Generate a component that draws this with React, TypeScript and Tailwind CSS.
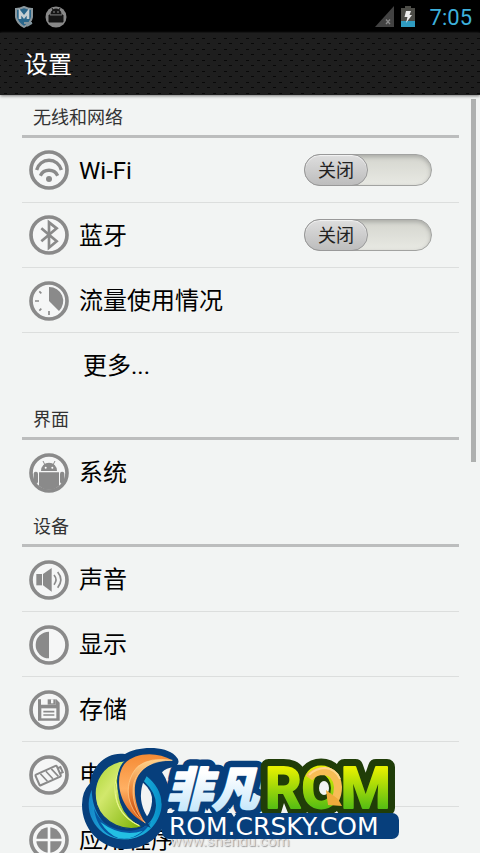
import { useState, type ReactNode } from 'react';

interface RowProps {
    label: string;
    icon?: ReactNode;
    last?: boolean;
}

function RingIcon({ children }: { children: ReactNode }) {
    return (
        <svg viewBox="0 0 120 120" className="size-10 shrink-0 text-[#8a8a8a]" fill="currentColor" aria-hidden="true">
            <circle cx="60" cy="60" r="54" fill="#f5f6f6" stroke="currentColor" strokeWidth="11" />
            {children}
        </svg>
    );
}

const icons = {
    wifi: (
        <RingIcon>
            <g fill="none" stroke="currentColor" strokeWidth="10">
                <path d="M23 60A38 38 0 0 1 97 60" />
                <path d="M34 77A29 29 0 0 1 86 77" />
            </g>
            <circle cx="60" cy="87" r="9" />
        </RingIcon>
    ),
    bluetooth: (
        <RingIcon>
            <path d="M37 40L83 79L60 98V22L83 40L37 79" fill="none" stroke="currentColor" strokeWidth="8" />
        </RingIcon>
    ),
    data: (
        <RingIcon>
            <path d="M60 60V18A42 42 0 0 1 90 90Z" />
            <path d="M60 90V102M37 83L31 89M18 60H30M37 37L31 31" fill="none" stroke="currentColor" strokeWidth="5" />
        </RingIcon>
    ),
    android: (
        <RingIcon>
            <path d="M36 54A24 25 0 0 1 84 54Z" />
            <path d="M48 36L42 24M72 36L78 24" stroke="currentColor" strokeWidth="3" />
            <path d="M30 58H90V98Q78 110 60 110Q42 110 30 98Z" />
            <rect x="14" y="56" width="13" height="36" rx="6" />
            <rect x="93" y="56" width="13" height="36" rx="6" />
            <circle cx="50" cy="44" r="3" fill="#fff" />
            <circle cx="70" cy="44" r="3" fill="#fff" />
        </RingIcon>
    ),
    sound: (
        <RingIcon>
            <rect x="22" y="42" width="17" height="34" />
            <path d="M42 42L68 24V95L42 76Z" />
            <path d="M75 45Q87 59 75 74M86 36Q105 59 86 83" fill="none" stroke="currentColor" strokeWidth="5" />
        </RingIcon>
    ),
    display: (
        <RingIcon>
            <path d="M60 20A40 40 0 0 0 60 100Z" />
        </RingIcon>
    ),
    storage: (
        <RingIcon>
            <path d="M27 28H36V44H80V28H82L92 38V92H27Z" />
            <path d="M56 28H80V44H56Z" />
            <rect x="66" y="28" width="7" height="12" fill="#f7f8f8" />
            <rect x="37" y="55" width="45" height="30" fill="#f7f8f8" />
            <path d="M43 65H76M43 75H76" stroke="currentColor" strokeWidth="5" />
        </RingIcon>
    ),
    battery: (
        <RingIcon>
            <g transform="rotate(-24 60 60)" fill="none" stroke="currentColor" strokeWidth="6">
                <rect x="22" y="43" width="70" height="35" rx="3" />
                <path d="M92 52H101V69H92" />
                <path d="M38 46L48 75M56 46L66 75M74 46L84 75" strokeWidth="5" />
            </g>
        </RingIcon>
    ),
    apps: (
        <RingIcon>
            <circle cx="60" cy="60" r="38" />
            <path d="M60 20V100M20 60H100" stroke="#f7f8f8" strokeWidth="8" />
        </RingIcon>
    ),
};

function StatusBar() {
    return (
        <div className="flex h-[33px] shrink-0 items-center bg-black px-2">
            <svg viewBox="0 0 20 22" className="ml-1 h-[22px] w-6" aria-hidden="true">
                <path d="M2 3Q6 3 10 1Q14 3 18 3V11Q17 17 10 21Q3 17 2 11Z" fill="#28658a" stroke="#8b979d" strokeWidth="2" />
                <path d="M6 13V6L10 11L14 6V13" fill="none" stroke="#c5ced2" strokeWidth="2.6" />
                <path d="M10 17H18M13 20L18 17" stroke="#81949d" strokeWidth="2" />
            </svg>
            <svg viewBox="0 0 22 22" className="ml-[9px] size-[22px]" aria-hidden="true">
                <circle cx="11" cy="11" r="10.5" fill="#888" />
                <path d="M6 8A5 5 0 0 1 16 8ZM7 2L8.500 5M15 2L13.500 5M4 9H18V16H4Z" fill="#151515" stroke="#151515" />
                <path d="M5 9H17" stroke="#888" strokeWidth=".8" />
                <circle cx="9" cy="6" r=".8" fill="#999" />
                <circle cx="13" cy="6" r=".8" fill="#999" />
            </svg>
            <svg viewBox="0 0 19 21" className="mr-[7px] ml-auto h-[21px] w-[19px]" aria-hidden="true">
                <path d="M19 0V21H0Z" fill="#424242" />
                <path d="M11 13.500L15 18M15 13.500L11 18" stroke="#8c8c8c" strokeWidth="1.300" />
            </svg>
            <svg viewBox="0 0 14 21" className="mr-[15px] h-[21px] w-3.5" aria-hidden="true">
                <path d="M4 0H10V2H14V21H0V2H4Z" fill="#4d4d48" />
                <path d="M0 15H14V21H0Z" fill="#2f9bc0" />
                <path d="M5 5H10L8.500 9H11L5 17L6.500 11H3.500Z" fill="#eee" />
            </svg>
            <span className="pt-0.5 font-[Roboto,sans-serif] text-[22px] leading-8 text-[#3eb1dc]">7:05</span>
        </div>
    );
}

function SectionTitle({ children }: { children: ReactNode }) {
    return (
        <h2 className="h-[43px] border-b-3 border-[#bcbdbd] pl-[11px] text-lg leading-[45px] text-[#333]">{children}</h2>
    );
}

function Row({ label, icon, last }: RowProps) {
    return (
        <li className={last ? '' : 'border-b border-[#dcdedd]'}>
            <button type="button" className="flex h-16 w-full items-center gap-2.5 pt-0.5 pl-[7px] text-left text-2xl">
                {icon}
                <span className={icon ? '' : 'pl-[54px]'}>{label}</span>
            </button>
        </li>
    );
}

function SwitchRow({ label, icon }: RowProps) {
    const [on, setOn] = useState(false);

    return (
        <li className="border-b border-[#dcdedd]">
            <label className="flex h-16 items-center gap-2.5 pr-[27px] pl-[7px] text-2xl">
                {icon}
                <span className="flex-1 pt-0.5">{label}</span>
                <input type="checkbox" role="switch" className="peer sr-only" checked={on} onChange={() => setOn(!on)} />
                <span className="flex h-8 w-32 rounded-full border border-[#a2a3a1] bg-linear-to-b from-[#d4d5ce] to-[#e8e9e3] shadow-[inset_0_2px_4px_#a9aaa6] peer-checked:justify-end">
                    <span className="-my-px -ml-px w-16 rounded-full border border-[#999] bg-linear-to-b from-[#dedede] to-[#bdbdbd] text-center text-lg leading-8 text-[#222] shadow-[inset_0_1px_1px_#f4f4f4]">
                        {on ? '打开' : '关闭'}
                    </span>
                </span>
            </label>
        </li>
    );
}

function RomLogo() {
    return (
        <svg viewBox="0 0 325 106" className="absolute bottom-0.5 left-20 h-[106px] w-[325px]" aria-label="非凡ROM">
            <defs>
                <linearGradient id="green" x1="0" y1="0" x2="1" y2="1">
                    <stop offset="0" stopColor="#a8d431" />
                    <stop offset=".35" stopColor="#d2e86c" />
                    <stop offset="1" stopColor="#78b000" />
                </linearGradient>
                <linearGradient id="orange" x1="0" y1="0" x2="0" y2="1">
                    <stop offset="0" stopColor="#f58b35" />
                    <stop offset=".5" stopColor="#ffb063" />
                    <stop offset="1" stopColor="#d65a10" />
                </linearGradient>
                <linearGradient id="orangeInner" x1="0" y1="0" x2="0" y2="1">
                    <stop offset="0" stopColor="#ffd28b" />
                    <stop offset=".5" stopColor="#ed8637" />
                    <stop offset="1" stopColor="#b83a04" />
                </linearGradient>
                <linearGradient id="ring" x1="0" y1="0" x2="1" y2="0">
                    <stop offset="0" stopColor="#1487c8" />
                    <stop offset=".5" stopColor="#28c9e8" />
                    <stop offset="1" stopColor="#088fc9" />
                </linearGradient>
                <linearGradient id="ice" x1="0" y1="0" x2="0" y2="1">
                    <stop offset=".3" stopColor="#fff" />
                    <stop offset="1" stopColor="#b9e2fa" />
                </linearGradient>
                <linearGradient id="lime" x1="0" y1="0" x2="0" y2="1">
                    <stop offset=".2" stopColor="#e5f000" />
                    <stop offset=".8" stopColor="#55bd13" />
                </linearGradient>
            </defs>

            {/* swirl */}
            <g transform="translate(-10 -10) scale(.333333)">
                <path
                    d="M165 57C200 34 285 30 316 62Q337 82 312 97Q288 99 276 112Q303 150 299 208C294 292 236 344 164 342C90 339 36 282 36 209Q36 170 60 145C66 90 113 49 165 57Z"
                    fill="#073f7c"
                />
                <path
                    d="M65 164C34 239 88 311 159 313C232 315 275 256 275 207Q273 158 230 124L222 139Q259 174 258 211C256 258 222 289 174 291C108 294 67 237 65 164Z"
                    fill="url(#ring)"
                />
                <path d="M72 220C96 288 192 310 244 260Q214 312 157 312C107 308 78 270 72 220Z" fill="#0757a2" />
                <path d="M91 261Q157 310 219 287Q184 318 145 309Q114 298 91 261Z" fill="#23bfe3" />
                <path d="M168 77C98 81 62 145 80 209C99 267 170 294 218 274C158 247 121 180 168 77Z" fill="url(#green)" stroke="#073f7c" strokeWidth="4" />
                <path d="M166 80C122 125 115 228 208 272C140 242 112 177 166 80Z" fill="#9ac61b" stroke="#e9f58d" strokeWidth="3" />
                <path
                    d="M307 76C261 50 197 51 163 87C130 132 147 225 226 264C192 211 181 143 215 109C237 83 269 75 307 76Z"
                    fill="url(#orange)"
                    stroke="#073f7c"
                    strokeWidth="12"
                    paintOrder="stroke"
                />
                <path d="M307 76C250 75 207 98 192 142C182 188 199 237 226 264C162 216 162 137 204 94Q239 66 307 76Z" fill="url(#orangeInner)" stroke="#ffd394" strokeWidth="2" />
                <path d="M219 143Q249 168 246 200Q243 229 231 244Q202 196 219 143Z" fill="#f2f4f3" />
            </g>

            {/* plates behind the lettering */}
            <g strokeLinejoin="round">
                <g fontFamily="'Noto Sans CJK SC', sans-serif" fontSize="46" fontWeight="900" fontStyle="italic">
                    <text x="86" y="61" stroke="#073f7c" strokeWidth="15" fill="#073f7c">非凡</text>
                    <text x="86" y="61" stroke="url(#ice)" strokeWidth="2" fill="url(#ice)">非凡</text>
                </g>
                <g fontFamily="Roboto, sans-serif" fontSize="57" fontWeight="700">
                    <text x="185" y="63" stroke="#203d08" strokeWidth="16" fill="#203d08">ROM</text>
                    <text x="185" y="63" stroke="url(#lime)" strokeWidth="2" fill="url(#lime)">ROM</text>
                </g>
            </g>
            {/* circular arrow over the O */}
            <ellipse cx="243" cy="43" rx="8" ry="12" fill="#203d08" />
            <ellipse cx="244" cy="43" rx="5" ry="7" fill="#f2f4f3" />
            <path d="M229 33Q234 26 244 26Q257 27 258 42Q258 49 255 55" fill="none" stroke="#f7bd55" strokeWidth="8" />
            <path d="M229 30Q236 23 245 23Q256 24 260 34" fill="none" stroke="#ffd78c" strokeWidth="2" />
            <path d="M246 45L248 60L262 61L258 54Z" fill="#efab3a" />
            <rect x="82" y="68" width="237" height="26" rx="7" fill="#073f7c" />
            <path d="M88 64L95 65L92 68H87ZM126 68L129 63L132 68ZM148 63L156 69L154 72ZM201 68L204 58L208 68Z" fill="#f2f4f3" />
            <text x="89" y="90" fontFamily="'DejaVu Sans', sans-serif" fontSize="25" fill="#fff">ROM.CRSKY.COM</text>
        </svg>
    );
}

export default function App() {
    return (
        <div className="relative flex h-screen flex-col overflow-hidden bg-[#f2f4f3] font-[Roboto,'Noto_Sans_CJK_SC',sans-serif] text-black">
            <StatusBar />
            <header className="z-10 h-[62px] shrink-0 bg-[#1e1e1e] bg-[radial-gradient(ellipse_2px_1px,#080808_60%,transparent),radial-gradient(ellipse_2px_1px,#080808_60%,transparent)] bg-[length:11px_11px] bg-[position:0_0,5px_5px] pl-6 shadow-[0_1px_3px_#777]">
                <h1 className="text-2xl leading-16 text-white">设置</h1>
            </header>

            <main className="relative min-h-0 flex-1 overflow-hidden pr-[21px] pl-[22px]">
                <SectionTitle>无线和网络</SectionTitle>
                <ul>
                    <SwitchRow label="Wi-Fi" icon={icons.wifi} />
                    <SwitchRow label="蓝牙" icon={icons.bluetooth} />
                    <Row label="流量使用情况" icon={icons.data} />
                    <Row label="更多..." last />
                </ul>
                <SectionTitle>界面</SectionTitle>
                <ul>
                    <Row label="系统" icon={icons.android} last />
                </ul>
                <SectionTitle>设备</SectionTitle>
                <ul>
                    <Row label="声音" icon={icons.sound} />
                    <Row label="显示" icon={icons.display} />
                    <Row label="存储" icon={icons.storage} />
                    <Row label="电池" icon={icons.battery} />
                    <Row label="应用程序" icon={icons.apps} last />
                </ul>
                <div className="absolute top-1 right-1 h-[363px] w-[5px] bg-[#aeb0af]" />
            </main>

            <span className="absolute bottom-0 left-[170px] font-[Roboto,sans-serif] text-[15px] leading-6 text-[#e4e4e4] [text-shadow:1px_1px_1px_#999]">
                www.shendu.com
            </span>
            <RomLogo />
        </div>
    );
}
